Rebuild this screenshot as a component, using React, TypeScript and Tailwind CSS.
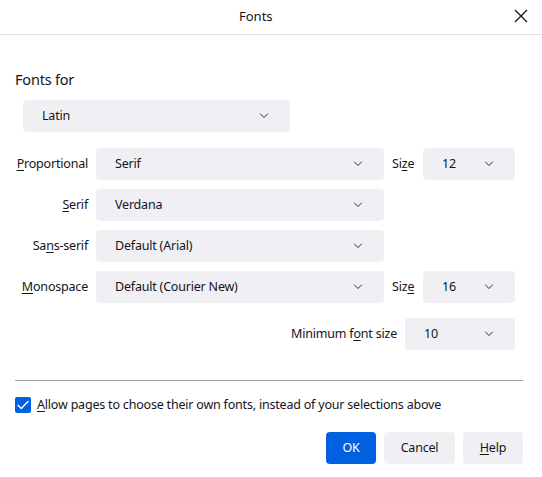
import React from "react";

const Chevron = () => (
  <svg width="10" height="6" viewBox="0 0 10 6" fill="none" className="shrink-0">
    <path d="M1.5 1l3.5 3.5L8.5 1" stroke="#2b2a33" strokeWidth="1" strokeLinecap="round" strokeLinejoin="round" />
  </svg>
);

const U = ({ children }: { children: React.ReactNode }) => <span className="underline underline-offset-2">{children}</span>;

const Select = ({ value, className }: { value: string; className: string }) => (
  <div className={`h-[32px] rounded-[4px] bg-[#f0f0f4] flex items-center justify-between pl-[19px] pr-[21px] ${className}`}>
    <span>{value}</span>
    <Chevron />
  </div>
);

export default function App() {
  return (
    <div className="w-[542px] h-[477px] bg-white text-[#15141a] text-[12.5px] tracking-[-0.2px] leading-[20px] flex flex-col" style={{ fontFamily: '"Noto Sans", "Open Sans", sans-serif' }}>
      <div className="h-[35px] pb-[3px] border-b border-[#e0e0e6] flex items-center shrink-0">
        <div className="w-[239px]" />
        <div className="flex-1 text-[13px] tracking-normal">Fonts</div>
        <svg width="14" height="14" viewBox="0 0 14 14" className="mr-[14px]">
          <path d="M1 1l12 12M13 1L1 13" stroke="#15141a" strokeWidth="1.3" />
        </svg>
      </div>
      <div className="pl-[15px] pr-[19px] flex flex-col">
        <div className="mt-[34px] text-[14.5px] tracking-[-0.2px] leading-[20px]">Fonts for</div>
        <Select value="Latin" className="ml-[8px] mt-[11px] w-[267px]" />
        <div className="mt-[16px] grid grid-cols-[73px_288px_23px_92px] gap-x-[8px] gap-y-[9px] items-center">
          <div className="text-right"><U>P</U>roportional</div>
          <Select value="Serif" className="" />
          <div>Si<U>z</U>e</div>
          <Select value="12" className="" />

          <div className="text-right"><U>S</U>erif</div>
          <Select value="Verdana" className="" />
          <div />
          <div />

          <div className="text-right">Sa<U>n</U>s-serif</div>
          <Select value="Default (Arial)" className="" />
          <div />
          <div />

          <div className="text-right"><U>M</U>onospace</div>
          <Select value="Default (Courier New)" className="" />
          <div>Siz<U>e</U></div>
          <Select value="16" className="" />
        </div>
        <div className="mt-[15px] flex items-center justify-end gap-[8px] pr-[8px]">
          <div>Minimum f<U>o</U>nt size</div>
          <Select value="10" className="w-[110px]" />
        </div>
        <div className="mt-[30px] h-px bg-[#a0a0a8]" />
        <div className="mt-[14px] flex items-center gap-[6px]">
          <div className="w-[16px] h-[16px] rounded-[2px] bg-[#0061e0] flex items-center justify-center">
            <svg width="12" height="10" viewBox="0 0 12 10" fill="none">
              <path d="M1 5.2l3.3 3.3L11 1.5" stroke="white" strokeWidth="1.4" strokeLinecap="round" strokeLinejoin="round" />
            </svg>
          </div>
          <div><U>A</U>llow pages to choose their own fonts, instead of your selections above</div>
        </div>
        <div className="mt-[17px] flex justify-end gap-[8px]">
          <div className="h-[32px] w-[50px] rounded-[4px] bg-[#0061e0] text-white flex items-center justify-center">OK</div>
          <div className="h-[32px] w-[71px] rounded-[4px] bg-[#f0f0f4] flex items-center justify-center">Cancel</div>
          <div className="h-[32px] w-[60px] rounded-[4px] bg-[#f0f0f4] flex items-center justify-center"><U>H</U>elp</div>
        </div>
      </div>
    </div>
  );
}
